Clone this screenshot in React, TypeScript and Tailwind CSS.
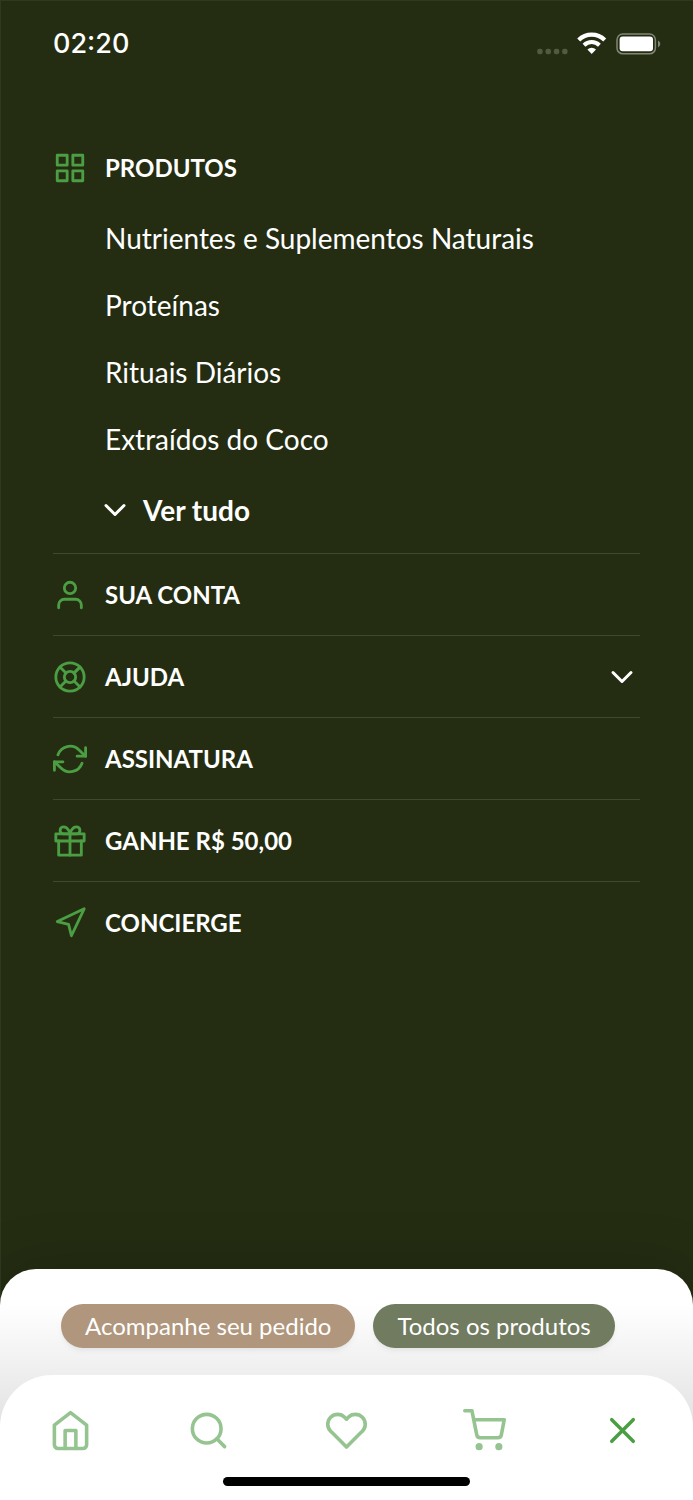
import type { IconType } from 'react-icons';
import {
  FiChevronDown,
  FiGift,
  FiGrid,
  FiHeart,
  FiHome,
  FiLifeBuoy,
  FiNavigation,
  FiRefreshCw,
  FiSearch,
  FiShoppingCart,
  FiUser,
  FiX,
} from 'react-icons/fi';

interface MenuEntry {
  label: string;
  icon: IconType;
  expandable?: boolean;
}

interface TabEntry {
  label: string;
  icon: IconType;
  active?: boolean;
}

const categories = ['Nutrientes e Suplementos Naturais', 'Proteínas', 'Rituais Diários', 'Extraídos do Coco'];

const menuEntries: MenuEntry[] = [
  { label: 'SUA CONTA', icon: FiUser },
  { label: 'AJUDA', icon: FiLifeBuoy, expandable: true },
  { label: 'ASSINATURA', icon: FiRefreshCw },
  { label: 'GANHE R$ 50,00', icon: FiGift },
  { label: 'CONCIERGE', icon: FiNavigation },
];

const tabs: TabEntry[] = [
  { label: 'Início', icon: FiHome },
  { label: 'Buscar', icon: FiSearch },
  { label: 'Favoritos', icon: FiHeart },
  { label: 'Carrinho', icon: FiShoppingCart },
  { label: 'Fechar menu', icon: FiX, active: true },
];

function StatusBar() {
  return (
    <header className="flex h-[88px] items-center justify-between pr-8 pl-[53px]">
      <time className="font-['Inter',sans-serif] text-[27px] leading-8 font-medium">02:20</time>
      <svg width="124" height="24" viewBox="0 0 124 24" aria-hidden="true">
        <g fill="#525b42">
          <rect x="0.2" y="16.7" width="5.5" height="5.5" rx="2.2" />
          <rect x="8.5" y="16.7" width="5.5" height="5.5" rx="2.2" />
          <rect x="16.8" y="16.7" width="5.5" height="5.5" rx="2.2" />
          <rect x="25.1" y="16.7" width="5.5" height="5.5" rx="2.2" />
        </g>
        <g fill="none" stroke="#fff">
          <path d="M41.7 8.1a18.4 18.4 0 0 1 26 0" strokeWidth="4.2" />
          <path d="M47 13.2a11 11 0 0 1 15.4 0" strokeWidth="4" />
        </g>
        <path d="M50.4 17.4a6.2 6.2 0 0 1 8.6 0L54.7 22z" fill="#fff" />
        <rect x="80" y="2" width="38.4" height="19.8" rx="5.8" fill="none" stroke="#818776" strokeWidth="1.5" />
        <rect x="82.6" y="4.6" width="33.4" height="14.6" rx="3" fill="#fff" />
        <path d="M121 8.6c3 1.6 3 5.2 0 6.8z" fill="#818776" />
      </svg>
    </header>
  );
}

function ProductsSection() {
  return (
    <section className="pb-[5px]">
      <h2 className="flex h-[72px] items-center gap-[18px] text-2xl font-bold">
        <FiGrid size={34} className="text-[#4b9e43]" />
        PRODUTOS
      </h2>
      <ul className="pl-[52px]">
        {categories.map((category) => (
          <li key={category}>
            <a href="#" className="flex h-[67px] items-center text-[28px] leading-9">
              {category}
            </a>
          </li>
        ))}
        <li>
          <button type="button" className="-ml-2 flex h-[76px] items-center gap-[10px] text-[28px] leading-9 font-bold">
            <FiChevronDown size={36} />
            Ver tudo
          </button>
        </li>
      </ul>
    </section>
  );
}

function MenuRow({ entry }: { entry: MenuEntry }) {
  const Icon = entry.icon;
  const rowClass = 'flex h-[81px] w-full items-center gap-[18px] text-left text-2xl font-bold';

  return (
    <li className="border-t border-[#3e482c]">
      {entry.expandable ? (
        <button type="button" aria-expanded="false" className={rowClass}>
          <Icon size={34} className="text-[#4b9e43]" />
          <span className="flex-1">{entry.label}</span>
          <FiChevronDown size={36} />
        </button>
      ) : (
        <a href="#" className={rowClass}>
          <Icon size={34} className="text-[#4b9e43]" />
          {entry.label}
        </a>
      )}
    </li>
  );
}

function BottomSheet() {
  return (
    <footer className="mt-auto rounded-t-[36px] bg-linear-to-b from-white from-15% to-[#dedede] to-75% shadow-[0_0_60px] shadow-black/20">
      <div className="flex gap-[18px] px-[61px] pt-[35px] pb-[27px] text-2xl leading-8">
        <a href="#" className="flex h-11 items-center rounded-full bg-[#af967c] px-6 shadow-md shadow-black/5">
          Acompanhe seu pedido
        </a>
        <a href="#" className="flex h-11 items-center rounded-full bg-[#717b5f] px-6 shadow-md shadow-black/5">
          Todos os produtos
        </a>
      </div>
      <nav className="rounded-t-[52px] bg-white pt-[34px] pb-[14px]">
        <ul className="flex justify-between px-[49px]">
          {tabs.map(({ label, icon: Icon, active }) => (
            <li key={label}>
              <button type="button" aria-label={label} className={`block ${active ? 'text-[#4b9e43]' : 'text-[#95c490]'}`}>
                <Icon size={43} />
              </button>
            </li>
          ))}
        </ul>
        <div className="mx-auto mt-[25px] h-[9px] w-[247px] rounded-full bg-black" />
      </nav>
    </footer>
  );
}

export default function App() {
  return (
    <div className="flex min-h-screen flex-col overflow-hidden bg-[#242d12] font-['Lato',sans-serif] text-white inset-shadow-[1px_1px_0_#303920]">
      <StatusBar />
      <main className="px-[53px] pt-11">
        <ProductsSection />
        <ul>
          {menuEntries.map((entry) => (
            <MenuRow key={entry.label} entry={entry} />
          ))}
        </ul>
      </main>
      <BottomSheet />
    </div>
  );
}
